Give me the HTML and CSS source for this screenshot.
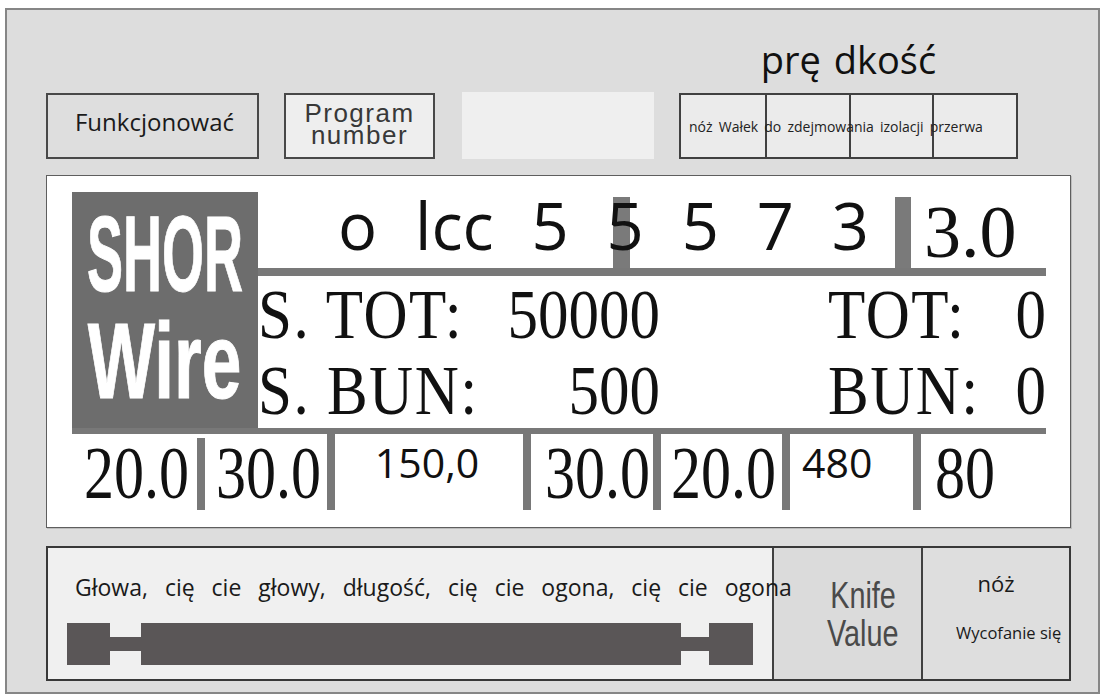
FILE: index.html
```html
<!DOCTYPE html>
<html lang="pl">
<head>
<meta charset="utf-8">
<title>SHOR Wire</title>
<link rel="stylesheet" href="styles.css">
</head>
<body>
<div class="panel">
  <div class="toolbar">
    <div class="btn btn-func">Funkcjonować</div>
    <div class="btn btn-prog">Program<br>number</div>
    <div class="blank"></div>
    <div class="speed">
      <div class="speed-title">prę dkość</div>
      <div class="speed-table">
        <div class="speed-cell"></div>
        <div class="speed-cell"></div>
        <div class="speed-cell"></div>
        <div class="speed-cell"></div>
        <div class="speed-label">nóż Wałek do zdejmowania izolacji przerwa</div>
      </div>
    </div>
  </div>

  <div class="display">
    <div class="screen">
      <div class="logo">
        <span class="logo-shor">SHOR</span>
        <span class="logo-wire">Wire</span>
      </div>
      <div class="topline">
        <div class="code"><span class="code-bar"></span><span class="code-text">o lcc 5 5 5 7 3</span></div>
        <div class="vbar-top"></div>
        <div class="topval">3.0</div>
      </div>
      <div class="hbar hbar-1"></div>
      <div class="stats">
        <div class="st lbl">S. TOT:</div>
        <div class="st num">50000</div>
        <div class="st"></div>
        <div class="st lbl">TOT:</div>
        <div class="st num">0</div>
        <div class="st lbl">S. BUN:</div>
        <div class="st num">500</div>
        <div class="st"></div>
        <div class="st lbl">BUN:</div>
        <div class="st num">0</div>
      </div>
      <div class="hbar hbar-2"></div>
      <div class="params">
        <div class="pv serif p1">20.0</div>
        <div class="pbar pbar-short"></div>
        <div class="pv serif p2">30.0</div>
        <div class="pbar"></div>
        <div class="pv sans p3">150,0</div>
        <div class="pbar"></div>
        <div class="pv serif p4">30.0</div>
        <div class="pbar"></div>
        <div class="pv serif p5">20.0</div>
        <div class="pbar"></div>
        <div class="pv sans p6">480</div>
        <div class="pbar"></div>
        <div class="pv serif p7">80</div>
      </div>
    </div>
  </div>

  <div class="wirepanel">
    <div class="wire-cell">
      <div class="wire-text">Głowa, cię cie głowy, długość, cię cie ogona, cię cie ogona</div>
      <svg class="wire" width="686" height="42" viewBox="0 0 686 42">
        <path d="M0 0H43V14H74V0H614V14H642V0H686V42H642V28H614V42H74V28H43V42H0Z" fill="#5a5657"/>
      </svg>
    </div>
    <div class="knife-cell">
      <span class="knife-line">Knife</span>
      <span class="knife-line">Value</span>
    </div>
    <div class="blade-cell">
      <div class="blade-title">nóż</div>
      <div class="blade-sub">Wycofanie się</div>
    </div>
  </div>
</div>
</body>
</html>
```

FILE: styles.css
```css
* { box-sizing: border-box; }

body {
  margin: 0;
  background: #ffffff;
  font-family: "Open Sans", "Noto Sans", sans-serif;
  color: #111111;
}

.panel {
  margin: 8px 0 0 5px;
  width: 1095px;
  height: 686px;
  border: 2px solid #868686;
  background: #dddddd;
  padding-left: 39px;
  display: flex;
  flex-direction: column;
}

/* ---------- toolbar ---------- */
.toolbar {
  height: 149px;
  display: flex;
  align-items: flex-end;
}

.btn {
  height: 66px;
  border: 2px solid #484848;
  display: flex;
  align-items: center;
  justify-content: center;
}

.btn-func {
  width: 213px;
  font-size: 24px;
  padding: 0 0 10px 4px;
  background: #dedede;
  color: #1a1a1a;
}

.btn-prog {
  width: 151px;
  margin-left: 25px;
  background: #eeeeee;
  font-family: "Liberation Sans", Arial, sans-serif;
  font-size: 26px;
  line-height: 22px;
  letter-spacing: 1.5px;
  text-align: center;
  color: #383838;
  padding-bottom: 4px;
}

.blank {
  width: 192px;
  height: 67px;
  margin-left: 27px;
  background: #efefef;
}

.speed {
  width: 339px;
  margin-left: 25px;
  display: flex;
  flex-direction: column;
}

.speed-title {
  font-size: 38px;
  line-height: 44px;
  text-align: center;
  margin-bottom: 12px;
  word-spacing: 3px;
  color: #111111;
}

.speed-table {
  height: 66px;
  border: 2px solid #404040;
  display: grid;
  grid-template-columns: repeat(4, 1fr);
  grid-template-rows: 1fr;
  background: #ebebeb;
}

.speed-cell { grid-row: 1; }
.speed-cell:nth-child(1) { grid-column: 1; }
.speed-cell:nth-child(2) { grid-column: 2; }
.speed-cell:nth-child(3) { grid-column: 3; }
.speed-cell:nth-child(4) { grid-column: 4; }
.speed-cell + .speed-cell { border-left: 2px solid #404040; }

.speed-label {
  grid-row: 1;
  grid-column: 1 / -1;
  align-self: center;
  padding-left: 8px;
  font-size: 14px;
  white-space: nowrap;
  word-spacing: 2.5px;
  color: #222222;
}

/* ---------- display ---------- */
.display {
  margin-top: 16px;
  width: 1025px;
  height: 353px;
  border: 1px solid #5e5e5e;
  background: #ffffff;
  padding: 16px 0 0 25px;
  box-shadow: 1px 1px 0 #bdbdbd;
}

.screen {
  width: 974px;
  display: grid;
  grid-template-columns: 186px 788px;
  grid-template-rows: 76px 8px 152px 6px 76px;
}

.logo {
  grid-column: 1;
  grid-row: 1 / 4;
  background: #6d6d6d;
  display: flex;
  flex-direction: column;
  align-items: center;
  padding-top: 22px;
  color: #ffffff;
  font-family: "Liberation Sans", Arial, sans-serif;
  font-weight: bold;
  font-size: 108px;
  line-height: 80px;
  -webkit-text-stroke: 1px #ffffff;
}

.logo-shor { display: block; transform: scaleX(0.5); }
.logo-wire { display: block; margin-top: 27px; transform: scaleX(0.66); }

.topline {
  grid-column: 2;
  grid-row: 1;
  display: flex;
}

.code {
  width: 637px;
  position: relative;
  padding-left: 80px;
  font-size: 65px;
  line-height: 66px;
  word-spacing: 21px;
  white-space: nowrap;
  color: #111111;
}

.code-bar {
  position: absolute;
  left: 355px;
  top: 5px;
  bottom: 0;
  width: 17px;
  background: #7a7a7a;
}

.code-text { position: relative; }

.vbar-top {
  width: 16px;
  margin-top: 5px;
  background: #7a7a7a;
}

.topval {
  flex: 1;
  padding: 2px 0 0 13px;
  font-family: "Liberation Serif", "Times New Roman", serif;
  font-size: 74px;
  line-height: 76px;
  color: #111111;
}

.hbar { background: #787878; }
.hbar-1 { grid-column: 2; grid-row: 2; }
.hbar-2 { grid-column: 1 / -1; grid-row: 4; }

.stats {
  grid-column: 2;
  grid-row: 3;
  display: grid;
  grid-template-columns: 242px 160px 168px 140px 78px;
  grid-template-rows: 76px 76px;
  font-family: "Liberation Serif", "Times New Roman", serif;
  font-size: 61px;
}

.st {
  height: 76px;
  line-height: 83px;
  white-space: nowrap;
  transform: scaleY(1.15);
  transform-origin: 0 62px;
}

.lbl { letter-spacing: 1.5px; }
.num { text-align: right; }

.params {
  grid-column: 1 / -1;
  grid-row: 5;
  display: flex;
}

.pv {
  height: 76px;
  flex: none;
  white-space: nowrap;
}

.serif {
  font-family: "Liberation Serif", "Times New Roman", serif;
  font-size: 60px;
  line-height: 76px;
  padding-top: 6px;
  transform: scaleY(1.23);
  transform-origin: 0 64px;
}

.sans {
  font-size: 41px;
  line-height: 56px;
}

.pbar {
  width: 8px;
  flex: none;
  background: #787878;
}
.pbar-short { margin-top: 4px; }

.p1 { width: 125px; text-align: right; padding-right: 8px; }
.p2 { width: 122px; text-align: right; padding-right: 6px; }
.p3 { width: 188px; text-align: center; padding-right: 4px; }
.p4 { width: 122px; text-align: right; padding-right: 3px; }
.p5 { width: 121px; text-align: right; padding-right: 6px; }
.p6 { width: 123px; padding-left: 12px; }
.p7 { width: 125px; padding-left: 14px; }

/* ---------- wire panel ---------- */
.wirepanel {
  margin-top: 18px;
  width: 1025px;
  height: 135px;
  border: 2px solid #383838;
  display: flex;
}

.wire-cell {
  width: 724px;
  background: #f0f0f0;
  padding-top: 24px;
}

.wire-text {
  position: relative;
  z-index: 1;
  padding-left: 27px;
  font-size: 23px;
  line-height: 31px;
  white-space: nowrap;
  word-spacing: 11px;
  color: #1a1a1a;
}

.wire {
  display: block;
  margin: 20px 0 0 19px;
}

.knife-cell {
  width: 149px;
  border-left: 2px solid #404040;
  background: #dbdbdb;
  display: flex;
  flex-direction: column;
  align-items: center;
  padding: 29px 0 0 31px;
  font-family: "Liberation Sans", Arial, sans-serif;
  font-size: 36px;
  line-height: 38px;
  color: #4a4a4a;
}

.knife-line { display: block; transform: scaleX(0.8); }

.blade-cell {
  flex: 1;
  border-left: 2px solid #404040;
  background: #dedede;
  padding-top: 20px;
}

.blade-title {
  text-align: center;
  font-size: 22px;
  line-height: 30px;
  color: #1a1a1a;
}

.blade-sub {
  margin-top: 24px;
  padding-left: 33px;
  font-size: 16.5px;
  line-height: 22px;
  white-space: nowrap;
  color: #1a1a1a;
}
```
